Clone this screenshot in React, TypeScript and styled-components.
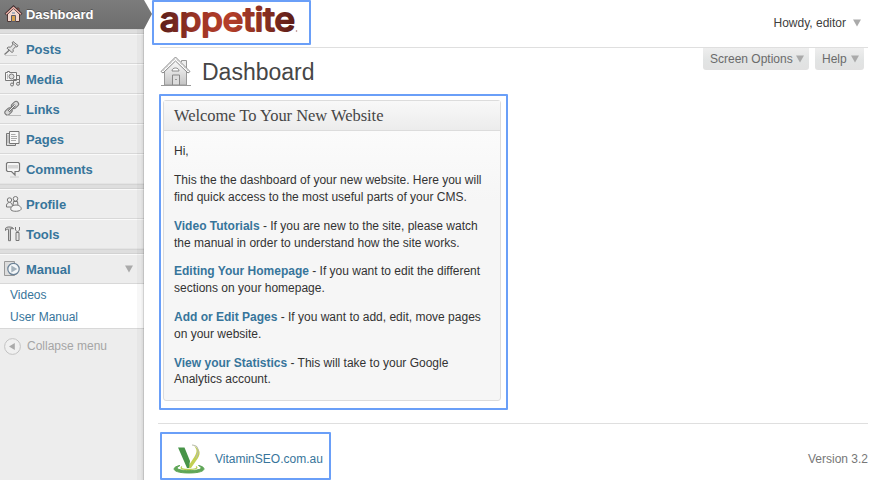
import React from "react";
import styled, { createGlobalStyle, css } from "styled-components";

const Global = createGlobalStyle`
  * { box-sizing: border-box; }
  html, body { margin: 0; padding: 0; background: #fff; }
  body { font-family: "Liberation Sans", Arial, sans-serif; font-size: 12px; color: #333; }
  svg { display: block; flex: none; overflow: visible; }
`;

const Page = styled.div`
  display: flex;
  width: 880px;
  height: 480px;
`;

const Sidebar = styled.nav`
  position: relative;
  flex: none;
  width: 144px;
  height: 480px;
  background: #ededed;
  &::after {
    content: "";
    position: absolute;
    top: 0;
    right: 0;
    width: 7px;
    height: 480px;
    background: linear-gradient(to right, rgba(0, 0, 0, 0.03) 0 4px, rgba(0, 0, 0, 0.07) 5px 6px, rgba(0, 0, 0, 0.18) 6px);
  }
`;

const Current = styled.a`
  position: relative;
  z-index: 2;
  display: flex;
  align-items: center;
  width: 152px;
  height: 29px;
  padding-left: 5px;
  background: linear-gradient(#7c7c7c, #6d6d6d);
  clip-path: polygon(0 0, 144px 0, 152px 14px, 144px 29px, 0 29px);
  color: #fff;
  font-size: 13px;
  font-weight: bold;
  text-shadow: 0 -1px 0 #555;
`;

const Separator = styled.div`
  height: 5px;
  background: #dedede;
  border-top: 1px solid #d4d4d4;
  border-bottom: 1px solid #d2d2d2;
`;

const Item = styled.a<{ $last?: boolean }>`
  display: flex;
  align-items: center;
  height: 30px;
  padding: 0 11px 0 4px;
  border-top: 1px solid #fafafa;
  border-bottom: 1px solid ${(p) => (p.$last ? "#e4e4e4" : "#d8d8d8")};
  color: #37759b;
  font-size: 13px;
  font-weight: bold;
`;

const ItemLabel = styled.span`
  flex: 1;
  margin-left: 4px;
  letter-spacing: -0.05px;
`;

const Submenu = styled.div`
  display: flex;
  flex-direction: column;
  height: 45px;
  padding-left: 10px;
  background: #fff;
  border-bottom: 1px solid #d8d8d8;
  color: #37759b;
  line-height: 22px;
`;

const Collapse = styled.div`
  display: flex;
  align-items: center;
  gap: 6px;
  height: 34px;
  padding-left: 4px;
  color: #a5a5a5;
`;

const Main = styled.main`
  flex: 1;
  display: flex;
  flex-direction: column;
  min-width: 0;
  padding: 0 12px 0 8px;
`;

const highlight = css`
  border: 2px solid #6a9ff8;
  border-radius: 1px;
`;

const TopBar = styled.header`
  display: flex;
  justify-content: space-between;
  height: 47px;
`;

const LogoFrame = styled.div`
  ${highlight}
  width: 159px;
  height: 45px;
  padding: 1px 0 0 6px;
`;

const Howdy = styled.div`
  display: flex;
  align-items: center;
  gap: 7px;
  height: 46px;
  padding-right: 7px;
  color: #404040;
`;

const TitleRow = styled.div`
  display: flex;
  height: 47px;
  margin-left: 8px;
  border-top: 1px solid #dfdfdf;
`;

const Title = styled.h1`
  flex: 1;
  margin: 0 0 0 11px;
  padding-top: 10px;
  font-size: 23px;
  line-height: 29px;
  font-weight: normal;
  color: #464646;
`;

const HomeSlot = styled.div`
  padding-top: 7px;
`;

const Tab = styled.div<{ $width: number }>`
  display: flex;
  align-items: center;
  justify-content: space-between;
  width: ${(p) => p.$width}px;
  height: 22px;
  margin-left: 6px;
  padding: 0 5px 0 7px;
  border-radius: 0 0 3px 3px;
  background: linear-gradient(#eeeeee, #e2e4e4 55%, #e1e1e1);
  color: #6b6b6b;
`;

const Tabs = styled.div`
  display: flex;
  padding-right: 4px;
`;

const WelcomeFrame = styled.section`
  ${highlight}
  width: 349px;
  height: 316px;
  margin-left: 7px;
  padding: 4px 5px 7px 2px;
`;

const Widget = styled.div`
  height: 301px;
  border: 1px solid #dcdcdc;
  border-radius: 3px;
  background: linear-gradient(#fbfbfb 30px, #f6f6f6 100px);
`;

const WidgetTitle = styled.h2`
  height: 30px;
  margin: 0;
  padding-left: 10px;
  border-bottom: 1px solid #dcdcdc;
  background: linear-gradient(#f8f8f8, #ececec);
  color: #464646;
  font: normal 16.5px/30px "Liberation Serif", Georgia, serif;
  letter-spacing: -0.04px;
`;

const WidgetBody = styled.div`
  padding: 12.4px 10px 0;
  line-height: 16.8px;
  white-space: nowrap;
`;

const Paragraph = styled.p`
  margin: 0 0 12px;
`;

const Shortcut = styled.a`
  color: #37759b;
  font-weight: bold;
`;

const Footer = styled.footer`
  display: flex;
  justify-content: space-between;
  height: 57px;
  margin: 13px 0 0 6px;
  padding: 8px 0 0 2px;
  border-top: 1px solid #dfdfdf;
  color: #777;
`;

const CreditFrame = styled.div`
  ${highlight}
  display: flex;
  align-items: center;
  gap: 9px;
  width: 171px;
  height: 48px;
  padding: 5px 0 0 10px;
  color: #37759b;
`;

const Version = styled.span`
  line-height: 54px;
`;

const Triangle = () => (
  <svg width="8" height="8" viewBox="0 0 8 8">
    <path d="M0 .5h8L4 7.500z" fill="#aaa" />
  </svg>
);

const line = { fill: "none", stroke: "#777", strokeWidth: 1 } as const;

const icons: Record<string, React.ReactNode> = {
  Posts: (
    <g {...line} transform="translate(-1 0)">
      <path d="M10 1.500l5 4-1 1.500-1.500-.3L10 9.500l.3 2-1.300 1-5-4.300 1.200-1.200 2.400.2L10.200 4 9 3z" fill="#e2e2e2" />
      <path d="M6.500 10L1.500 14.500" strokeWidth="1.300" />
      <path d="M10.500 4l2.500 2.300" />
      <path d="M2 15.500h12" stroke="#ccc" />
    </g>
  ),
  Media: (
    <g {...line}>
      <path d="M1.500 2.500h2v-1h2v1h7v8h-11z" fill="#f6f6f6" />
      <circle cx="7.500" cy="6.500" r="2.500" fill="#ddd" />
      <path d="M3.500 4v5" stroke="#bbb" />
      <path d="M9.500 14.500v-5h6v4M12.500 5.500h3v4" />
      <circle cx="8" cy="14.500" r="1.500" fill="#e5e5e5" />
      <circle cx="14" cy="13.800" r="1.500" fill="#e5e5e5" />
    </g>
  ),
  Links: (
    <g {...line}>
      <rect x="-4" y="-2.600" width="8" height="5.200" rx="2.600" transform="translate(11 5) rotate(-42)" fill="#d8d8d8" />
      <rect x="-4" y="-2.600" width="8" height="5.200" rx="2.600" transform="translate(4.500 11.500) rotate(-42)" fill="#d8d8d8" />
      <path d="M4.500 11.500L11 5" stroke="#777" strokeWidth="2.600" />
      <path d="M4.500 11.500L11 5" stroke="#eee" />
      <path d="M3 15.500h14" stroke="#bbb" />
    </g>
  ),
  Pages: (
    <g {...line}>
      <path d="M5.500 3.500h-3v12h9v-2" fill="#ddd" />
      <path d="M5.500 1.500h9.500v12H5.500z" fill="#f8f8f8" />
      <path d="M7 4.500h4.500M7 6.500h6M7 8.500h6M7 10.500h5M4 5v8" stroke="#aaa" />
    </g>
  ),
  Comments: (
    <g {...line}>
      <path d="M3.500 2.500h11l1 1v7l-1 1H11v3.500l-3.500-3.500h-4l-1-1v-7z" fill="#f7f7f7" strokeWidth="1.200" />
      <path d="M4 5h10v3.500H4z" stroke="none" fill="#d5d5d5" />
      <path d="M6 17h9" stroke="#ccc" />
    </g>
  ),
  Profile: (
    <g {...line} fill="#eee">
      <circle cx="11.500" cy="3.800" r="2.300" />
      <path d="M9.500 6.500h4l.5 4h-5z" />
      <circle cx="5.500" cy="5" r="2.200" />
      <path d="M2.500 12c-.5-3 1-4.500 3-4.500s3 1.500 3 4.500z" />
      <path d="M7 15c-1-2.500 1.500-5 5-5s6 2.500 5 4.500-8 2.500-10 .5z" fill="#f5f5f5" />
    </g>
  ),
  Tools: (
    <g {...line}>
      <path d="M1.500 5.500V3.200C3 1.800 5 1.500 8.500 2.500l1.200 1.200H6.500v12h-2V4.500C3 4 2.500 4.500 1.500 5.500z" fill="#ccc" />
      <path d="M13 7.500h2v8h-3v-8z" fill="#e5e5e5" />
      <path d="M11.500 2v3l2 2 2-2V2" />
    </g>
  ),
  Manual: (
    <g {...line}>
      <path d="M.5 1.500h10v14H.5z" fill="#ddd" stroke="#999" />
      <circle cx="9.500" cy="9" r="5.700" fill="#f3f6f8" stroke="#6b8297" strokeWidth="1.200" />
      <path d="M7.300 5.500v7l6-3.500z" fill="#a3b1bb" stroke="none" />
    </g>
  ),
};

const MenuIcon = ({ name }: { name: string }) => (
  <svg width="18" height="18" viewBox="0 0 18 18">
    {icons[name]}
  </svg>
);

const RedHouse = () => (
  <svg width="17" height="17" viewBox="0 0 17 17">
    <path d="M2.500 8v7.500h12V8L8.500 2z" fill="#f4d8cf" stroke="#4d3836" />
    <path d="M12 2h2v4l-2-2z" fill="#b46c60" stroke="#4d3836" strokeWidth=".8" />
    <path d="M.5 8.500l8-7.500 8 7.500" fill="none" stroke="#402f31" strokeWidth="2.800" />
    <path d="M1 8.300L8.500 1.500l7.500 6.800" fill="none" stroke="#f1b4aa" strokeWidth="1.300" />
    <path d="M6.500 15.500v-6h4v6z" fill="#d6a24d" stroke="#5b5b69" />
    <path d="M7 7h3" stroke="#5685a8" />
  </svg>
);

const BigHouse = () => (
  <svg width="31" height="31" viewBox="0 0 31 31">
    <defs>
      <linearGradient id="wall" x2="0" y2="1">
        <stop stopColor="#fff" />
        <stop offset="1" stopColor="#c4c4c4" />
      </linearGradient>
    </defs>
    <path d="M21.500 7V5.500h5V13" fill="#eee" stroke="#999" />
    <path d="M4.500 15v15h22V15L15.500 4z" fill="url(#wall)" stroke="#999" />
    <path d="M1 16.500L15.500 2l14.500 14.500-2 1.500L15.500 6 3 18z" fill="#fff" stroke="#888" />
    <path d="M3 16L15.500 3.500 28 16" fill="none" stroke="#bbb" strokeDasharray="1 1" />
    <path d="M12 16c0-4 7-4 7 0z" fill="#fff" stroke="#888" />
    <path d="M12.500 30v-10h7v10z" fill="#ddd" stroke="#888" />
    <path d="M15 24.500h2M1 30.500h30" fill="none" stroke="#999" />
  </svg>
);

const Wordmark = () => (
  <svg width="144" height="40" viewBox="0 0 144 40">
    <defs>
      <linearGradient id="brand" gradientUnits="userSpaceOnUse" x1="0" x2="136">
        <stop stopColor="#5c1f1b" />
        <stop offset=".28" stopColor="#9d3526" />
        <stop offset=".5" stopColor="#b53e29" />
        <stop offset=".75" stopColor="#8b3022" />
        <stop offset="1" stopColor="#5a1c17" />
      </linearGradient>
    </defs>
    <text x="0" y="28" textLength="135" lengthAdjust="spacingAndGlyphs" fontFamily="Inter, sans-serif" fontWeight="400" fontSize="31.500" fill="url(#brand)" stroke="url(#brand)" strokeWidth="2" strokeLinejoin="round">
      appetite
    </text>
    <circle cx="136.500" cy="28" r=".8" fill="#a77" />
  </svg>
);

const VitaminMark = () => (
  <svg width="34" height="32" viewBox="0 0 34 32">
    <path d="M8 22.500c-9 1.500-9 7.500 9 7.500s18-6 9.500-7.500c5 2.500 3 5-9.500 5s-14-2.500-9-5z" fill="#5fa657" stroke="#5fa657" strokeWidth="1" />
    <path d="M10 23.500c-3 2.500 2 3 7 3s10-1 7-3" fill="none" stroke="#b6cf51" strokeWidth="1.300" />
    <path d="M15 25l6-9c4-6 5-9 1-13 6 3 7 7 4 12l-7 10z" fill="#c2d052" />
    <path d="M6 4.500h6.500L18 18l-1 7h-2z" fill="#479448" />
    <path d="M20 2c5 0 7 4 6 8l-2 5" fill="none" stroke="#b9bda9" strokeWidth="1.200" />
  </svg>
);

const CollapseIcon = () => (
  <svg width="17" height="17" viewBox="0 0 17 17">
    <circle cx="8.500" cy="8.500" r="7.900" fill="#f0f0f0" stroke="#c3c3c3" />
    <path d="M10.800 5v7L5 8.500z" fill="#aaa" />
  </svg>
);

const groups = [["Posts", "Media", "Links", "Pages", "Comments"], ["Profile", "Tools"]];

const shortcuts = [
  ["Video Tutorials", " - If you are new to the site, please watch", "the manual in order to understand how the site works."],
  ["Editing Your Homepage", " - If you want to edit the different", "sections on your homepage."],
  ["Add or Edit Pages", " - If you want to add, edit, move pages", "on your website."],
  ["View your Statistics", " - This will take to your Google", "Analytics account."],
];

export default function App() {
  return (
    <Page>
      <Global />
      <Sidebar>
        <Current>
          <RedHouse />
          <ItemLabel>Dashboard</ItemLabel>
        </Current>
        <Separator />
        {groups.map((group) => (
          <React.Fragment key={group[0]}>
            {group.map((name, i) => (
              <Item key={name} $last={i === group.length - 1}>
                <MenuIcon name={name} />
                <ItemLabel>{name}</ItemLabel>
              </Item>
            ))}
            <Separator />
          </React.Fragment>
        ))}
        <Item>
          <MenuIcon name="Manual" />
          <ItemLabel>Manual</ItemLabel>
          <Triangle />
        </Item>
        <Submenu>
          <span>Videos</span>
          <span>User Manual</span>
        </Submenu>
        <Collapse>
          <CollapseIcon />
          Collapse menu
        </Collapse>
      </Sidebar>
      <Main>
        <TopBar>
          <LogoFrame>
            <Wordmark />
          </LogoFrame>
          <Howdy>
            Howdy, editor <Triangle />
          </Howdy>
        </TopBar>
        <TitleRow>
          <HomeSlot>
            <BigHouse />
          </HomeSlot>
          <Title>Dashboard</Title>
          <Tabs>
            <Tab $width={106}>
              Screen Options <Triangle />
            </Tab>
            <Tab $width={49}>
              Help <Triangle />
            </Tab>
          </Tabs>
        </TitleRow>
        <WelcomeFrame>
          <Widget>
            <WidgetTitle>Welcome To Your New Website</WidgetTitle>
            <WidgetBody>
              <Paragraph>Hi,</Paragraph>
              <Paragraph>
                This the the dashboard of your new website. Here you will
                <br />
                find quick access to the most useful parts of your CMS.
              </Paragraph>
              {shortcuts.map(([name, first, second]) => (
                <Paragraph key={name}>
                  <Shortcut>{name}</Shortcut>
                  {first}
                  <br />
                  {second}
                </Paragraph>
              ))}
            </WidgetBody>
          </Widget>
        </WelcomeFrame>
        <Footer>
          <CreditFrame>
            <VitaminMark />
            VitaminSEO.com.au
          </CreditFrame>
          <Version>Version 3.2</Version>
        </Footer>
      </Main>
    </Page>
  );
}
